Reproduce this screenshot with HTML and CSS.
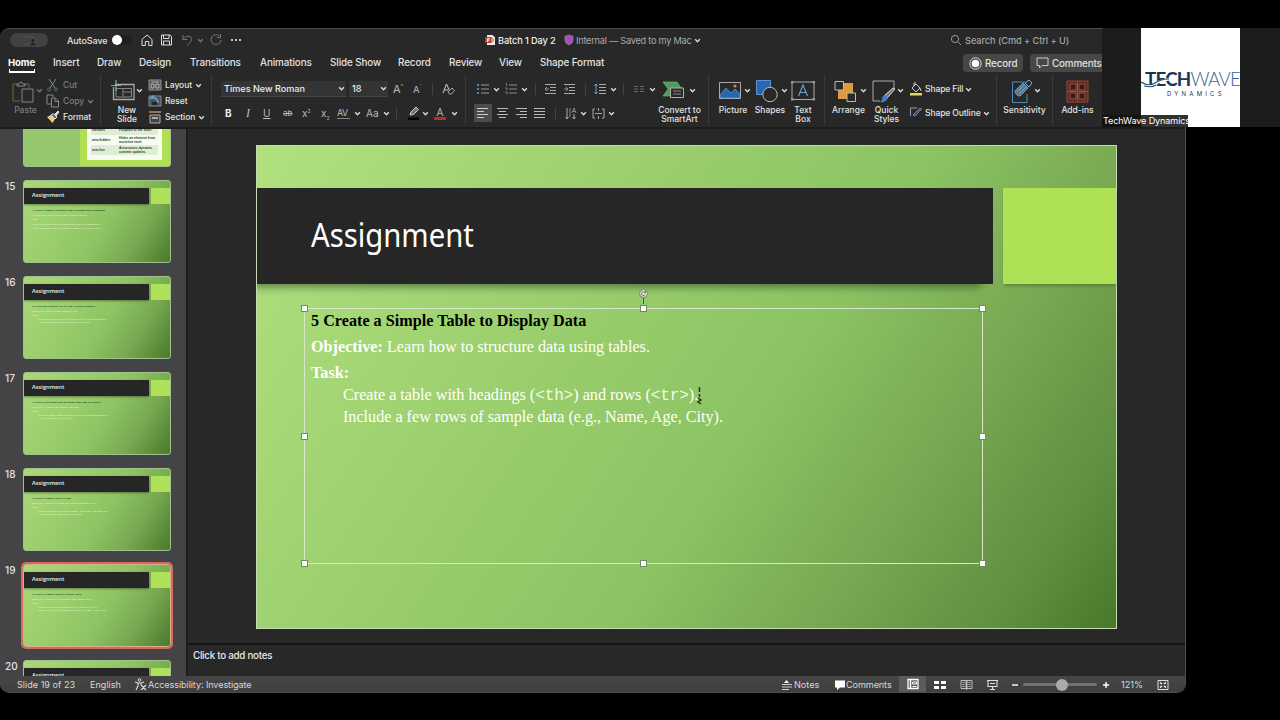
FILE: index.html
```
<!DOCTYPE html>
<html lang="en">
<head>
<meta charset="utf-8">
<title>Batch 1 Day 2</title>
<link rel="stylesheet" href="styles.css">
</head>
<body>
<svg class="defs" width="0" height="0">
  <symbol id="chev" viewBox="0 0 6 6"><path d="M1 2l2 2 2-2" fill="none" stroke="currentColor" stroke-width="1.2"/></symbol>
</svg>
<div class="app">
  <header class="titlebar">
    <span class="pill"><svg width="38" height="14" viewBox="0 0 38 14"><path d="M13 4h11v7h-9" fill="none" stroke="#555"/><circle cx="23" cy="7.500" r="1.500" fill="#1c1c1c"/><path d="M20 12q3-4 6 0z" fill="#1c1c1c"/></svg></span>
    <span class="t-auto">AutoSave</span>
    <span class="toggle"><i></i></span>
    <svg width="14" height="14" viewBox="0 0 14 14"><path d="M2 6.500l5-4.500 5 4.500v6H8.700V8.500H5.300v4H2z" fill="none" stroke="#ddd"/></svg>
    <svg width="14" height="14" viewBox="0 0 14 14"><path d="M1.500 2h8.500l1.500 1.500V12h-10zM3.500 2v3.500h5.500V2M3.500 12V8h6v4" fill="none" stroke="#ddd"/></svg>
    <svg width="14" height="14" viewBox="0 0 14 14"><path d="M2 2v4.500h4.500M2 6.500c2-4 9-4.500 8.500 0-.2 2-2.500 4-4.500 6" fill="none" stroke="#777"/></svg>
    <svg class="chev dim"><use href="#chev"/></svg>
    <svg width="14" height="14" viewBox="0 0 14 14"><path d="M10.500 3A5 5 0 1 0 12 7M11.500 1v3.500H8" fill="none" stroke="#777"/></svg>
    <svg width="14" height="14" viewBox="0 0 14 14"><g fill="#eee"><circle cx="2" cy="7" r="1.100"/><circle cx="6" cy="7" r="1.100"/><circle cx="10" cy="7" r="1.100"/></g></svg>
    <svg width="11" height="12" viewBox="0 0 11 12"><path d="M2 1h5.500L10 3.500V11H2z" fill="#f4e8e4"/><rect y="3" width="6.500" height="6" rx="1" fill="#b9432e"/><circle cx="6" cy="6" r="2.300" fill="none" stroke="#c8523c"/><path d="M2.500 8V4.500h1.500v1.800H2.500" fill="none" stroke="#fff" stroke-width=".8"/></svg>
    <span class="t-file">Batch 1 Day 2</span>
    <svg width="10" height="12" viewBox="0 0 10 12"><path d="M5 1l4 1.300v4Q9 9.500 5 11 1 9.500 1 6.300v-4z" fill="#9d55b2" stroke="#b77bc8" stroke-width=".6"/></svg>
    <span class="t-saved">Internal — Saved to my Mac</span>
    <svg class="chev"><use href="#chev"/></svg>
    <svg width="12" height="12" viewBox="0 0 12 12"><circle cx="5" cy="5" r="3.600" fill="none" stroke="#999"/><path d="M7.700 7.700L11 11" stroke="#999"/></svg>
    <span class="t-search">Search (Cmd + Ctrl + U)</span>
  </header>

  <nav class="tabs">
    <span class="active">Home</span><span>Insert</span><span>Draw</span><span>Design</span><span>Transitions</span><span>Animations</span><span>Slide Show</span><span>Record</span><span>Review</span><span>View</span><span>Shape Format</span>
    <span class="chip rec"><svg width="13" height="13" viewBox="0 0 13 13"><circle cx="6.500" cy="6.500" r="5.700" fill="none" stroke="#ddd"/><circle cx="6.500" cy="6.500" r="3.800" fill="#fff"/></svg>Record</span>
    <span class="chip com"><svg width="13" height="12" viewBox="0 0 13 12"><path d="M1 1h11v7.500H6L3.500 11V8.500H1z" fill="none" stroke="#ccc"/></svg>Comments</span>
  </nav>

  <section class="ribbon">
    <div class="group g-clip">
      <div class="big dimmed">
        <div class="ic"><svg width="24" height="24" viewBox="0 0 24 24"><path d="M6 4H1v17h7M12 4h5v4" fill="none" stroke="#75633e"/><path d="M5 6V4h2q2-4 4 0h2v2z" fill="none" stroke="#888"/><path d="M10 9h11v13H10z" fill="#282828" stroke="#858585"/></svg><svg class="chev"><use href="#chev"/></svg></div>
        <b>Paste</b>
      </div>
      <div class="mini">
        <div class="dimmed"><svg width="14" height="14" viewBox="0 0 14 14"><path d="M3 1l6 9M10 1L4 10" stroke="#888"/><circle cx="3" cy="11.500" r="1.500" fill="none" stroke="#577080"/><circle cx="10" cy="11.500" r="1.500" fill="none" stroke="#577080"/></svg>Cut</div>
        <div class="dimmed"><svg width="14" height="14" viewBox="0 0 14 14"><path d="M5 10H1V1h6v2M5.500 4h4l3 3v6h-7zM9 4v3.500h3.500" fill="none" stroke="#888"/></svg>Copy<svg class="chev"><use href="#chev"/></svg></div>
        <div><svg width="14" height="14" viewBox="0 0 14 14"><path d="M1 7l4-2 4 4-2.500 4z" fill="#e4cc7a"/><path d="M5 5l2-1.500L11 7 9 9z" fill="#666" stroke="#ddd"/><path d="M8.500 4.500L12 1l1 1-3 4" fill="#ddd" stroke="#ddd"/></svg>Format</div>
      </div>
    </div>
    <div class="group g-slides">
      <div class="big">
        <div class="ic"><svg width="25" height="24" viewBox="0 0 25 24"><path d="M4 4.500h19v15H2.500V7" fill="none" stroke="#a8a8a8" stroke-width="1.300"/><path d="M5 8.500h15.500v8.500H5zM12 8.500V17M12 12h8" fill="none" stroke="#858585"/><path d="M5 0v11M0 5.500h10" stroke="#73bd83" stroke-width="1.200"/></svg><svg class="chev"><use href="#chev"/></svg></div>
        <b>New<br>Slide</b>
      </div>
      <div class="mini">
        <div><svg width="14" height="12" viewBox="0 0 14 12"><path d="M1 1h12v10H1z" fill="#4b4b4b" stroke="#999"/><path d="M3 3h8M3 5h3v4H3zM8 5h3v4H8z" fill="none" stroke="#bbb"/></svg>Layout<svg class="chev"><use href="#chev"/></svg></div>
        <div><svg width="14" height="12" viewBox="0 0 14 12"><path d="M1 1h12v10H1z" fill="#465560" stroke="#888"/><path d="M2 4l3-3v2q5 0 5 5" fill="none" stroke="#65b2d2" stroke-width="1.300"/><path d="M4 7h5v3H4z" fill="#252525"/></svg>Reset</div>
        <div><svg width="14" height="14" viewBox="0 0 14 14"><path d="M1 1h12v2H1z" fill="#92745f"/><path d="M2 5h10v8H2z" fill="#444" stroke="#aaa"/><path d="M4 7h6v2H4z" fill="#aaa"/></svg>Section<svg class="chev"><use href="#chev"/></svg></div>
      </div>
    </div>
    <div class="group g-font">
      <div class="row f1">
        <span class="box fam">Times New Roman<svg class="chev"><use href="#chev"/></svg></span>
        <span class="box siz">18<svg class="chev"><use href="#chev"/></svg></span>
        <span class="ga">A<sup>^</sup></span><span class="ga sm">A<sup>ˇ</sup></span><i class="sep"></i>
        <svg width="14" height="14" viewBox="0 0 14 14"><path d="M1 11L4.500 2 8 10M2.500 8H6" fill="none" stroke="#ccc"/><path d="M6 10l4-4 2.500 2.500-3 3.500H7.500z" fill="#292929" stroke="#aaa"/></svg>
      </div>
      <div class="row f2">
        <b class="gb">B</b><i class="gi">I</i><u class="gu">U</u><s class="gs">ab</s><span class="gx">x<sup>2</sup></span><span class="gx">x<sub>2</sub></span>
        <span class="av">AV</span><svg class="chev"><use href="#chev"/></svg><span class="aa">Aa</span><svg class="chev"><use href="#chev"/></svg><i class="sep"></i>
        <svg width="13" height="15" viewBox="0 0 13 15"><path d="M3 9l1-3 5-5 2.500 2.500-5 5z" fill="#777" stroke="#ccc"/><path d="M1 11.500h11v2.500H1z" fill="#000"/></svg><svg class="chev"><use href="#chev"/></svg>
        <span class="fc">A</span><svg class="chev"><use href="#chev"/></svg>
      </div>
    </div>
    <div class="group g-para">
      <div class="rows">
        <div class="row p1">
          <svg width="13" height="12" viewBox="0 0 13 12"><path d="M4 2h8M4 6h8M4 10h8" stroke="#999"/><path d="M0 2h2M0 6h2M0 10h2" stroke="#69a0cc" stroke-width="1.500"/></svg><svg class="chev"><use href="#chev"/></svg>
          <svg width="13" height="12" viewBox="0 0 13 12"><path d="M4 2h8M4 6h8M4 10h8" stroke="#888"/><path d="M1.500 0v3M0 5h2v2M0 9h2v2.500" fill="none" stroke="#58839e"/></svg><svg class="chev"><use href="#chev"/></svg>
          <i class="sep"></i>
          <svg width="13" height="12" viewBox="0 0 13 12"><path d="M1 1.500h11M6 4.500h6M6 7.500h6M1 10.500h11" stroke="#aaa"/><path d="M5 6H1m2-2L1 6l2 2" fill="none" stroke="#69a0cc"/></svg>
          <svg width="13" height="12" viewBox="0 0 13 12"><path d="M1 1.500h11M6 4.500h6M6 7.500h6M1 10.500h11" stroke="#aaa"/><path d="M1 6h4M3 4l2 2-2 2" fill="none" stroke="#69a0cc"/></svg>
          <i class="sep"></i>
          <svg width="13" height="12" viewBox="0 0 13 12"><path d="M5 1.500h7M5 4.500h7M5 7.500h7M5 10.500h7" stroke="#aaa"/><path d="M2 1v10M.5 3L2 1l1.500 2M.5 9L2 11l1.500-2" fill="none" stroke="#69a0cc"/></svg><svg class="chev"><use href="#chev"/></svg>
          <i class="sep"></i>
          <svg width="13" height="12" viewBox="0 0 13 12"><path d="M1 3.500h4M7 3.500h4M1 6h4M7 6h4M1 8.500h4M7 8.500h4" stroke="#666"/></svg><svg class="chev"><use href="#chev"/></svg>
        </div>
        <div class="row p2">
          <span class="on"><svg width="13" height="12" viewBox="0 0 13 12"><path d="M1 1.500h11M1 4.500h7M1 7.500h11M1 10.500h7" stroke="#ccc"/></svg></span>
          <svg width="13" height="12" viewBox="0 0 13 12"><path d="M1 1.500h11M3 4.500h7M1 7.500h11M3 10.500h7" stroke="#bbb"/></svg>
          <svg width="13" height="12" viewBox="0 0 13 12"><path d="M1 1.500h11M5 4.500h7M1 7.500h11M5 10.500h7" stroke="#bbb"/></svg>
          <svg width="13" height="12" viewBox="0 0 13 12"><path d="M1 1.500h11M1 4.500h11M1 7.500h11M1 10.500h11" stroke="#bbb"/></svg>
          <i class="sep"></i>
          <svg width="13" height="13" viewBox="0 0 13 13"><path d="M2 1v11M.5 10L2 12l1.500-2M9 7v5M7.500 10L9 12l1.500-2" fill="none" stroke="#aaa"/><path d="M5 1v9M7 6l2-5 2 5M7.500 4.500h3" fill="none" stroke="#888"/></svg><svg class="chev"><use href="#chev"/></svg>
          <svg width="13" height="13" viewBox="0 0 13 13"><path d="M3 2H1v9h2M10 2h2v9h-2M3 6.500h7M6.500 1v3M6.500 9v3" fill="none" stroke="#aaa"/></svg><svg class="chev"><use href="#chev"/></svg>
        </div>
      </div>
      <div class="big conv">
        <div class="ic"><svg width="23" height="20" viewBox="0 0 23 20"><path d="M1 2h14l5 7-4 7H1l5-7z" fill="#4f9d5b" stroke="#79bc83" stroke-width=".6"/><path d="M8.500 8h13v9.500h-13z" fill="#292929" stroke="#b0b0b0"/><path d="M11 11h8M11 14h8" stroke="#888"/></svg><svg class="chev"><use href="#chev"/></svg></div>
        <b>Convert to<br>SmartArt</b>
      </div>
    </div>
    <div class="group g-insert">
      <div class="big"><div class="ic"><svg width="22" height="20" viewBox="0 0 22 20"><path d="M.5 2.500h21v16H.5z" fill="#292929" stroke="#aaa"/><path d="M1 15l6-7 5 5 4-4 5 5v4H1z" fill="#2468b4" stroke="#79a9da" stroke-width=".6"/><circle cx="16" cy="6" r="1.600" fill="#c0933f"/></svg><svg class="chev"><use href="#chev"/></svg></div><b>Picture</b></div>
      <div class="big"><div class="ic"><svg width="22" height="24" viewBox="0 0 22 24"><path d="M.5.500h14v14H.500z" fill="#2765b5" stroke="#6293cc"/><circle cx="14" cy="14.500" r="7.200" fill="#292929" stroke="#bbb"/></svg><svg class="chev"><use href="#chev"/></svg></div><b>Shapes</b></div>
      <div class="big"><div class="ic"><svg width="24" height="22" viewBox="0 0 24 22"><path d="M1 2h22v17.500H1z" fill="none" stroke="#aaa"/><path d="M0 1h2.500v2.500H0zM21.500 1H24v2.500h-2.500zM0 18h2.500v2.500H0zM21.500 18H24v2.500h-2.500z" fill="#999"/><path d="M7.500 16L12 5l4.500 11M9 12.500h6" fill="none" stroke="#63a0cf" stroke-width="1.200"/></svg></div><b>Text<br>Box</b></div>
    </div>
    <div class="group g-draw">
      <div class="big"><div class="ic"><svg width="23" height="24" viewBox="0 0 23 24"><path d="M6 3h13v13h-5v3H4V9h2z" fill="#dd9b3e"/><path d="M1 1.500h8.500V10H1zM13 13h8.500v8.500H13z" fill="#292929" stroke="#bbb"/></svg><svg class="chev"><use href="#chev"/></svg></div><b>Arrange</b></div>
      <div class="big"><div class="ic"><svg width="24" height="24" viewBox="0 0 24 24"><path d="M8 21H1V1h21v7" fill="none" stroke="#aaa"/><path d="M12 16L21 8l2 1-8 9z" fill="#777" stroke="#ddd"/><path d="M13 15l3 3q-2 5-8 4 3-2 2-5z" fill="#3c7dd0"/></svg><svg class="chev"><use href="#chev"/></svg></div><b>Quick<br>Styles</b></div>
      <div class="shape">
        <div><svg width="14" height="14" viewBox="0 0 14 14"><path d="M3 6l4-4 4 4-4 4zM5 4V1h2" fill="none" stroke="#ccc"/><path d="M11 6l1 3" stroke="#ccc"/><path d="M1 11h12v2.500H1z" fill="#e4da56"/></svg>Shape Fill<svg class="chev"><use href="#chev"/></svg></div>
        <div><svg width="14" height="14" viewBox="0 0 14 14"><path d="M8 2H1.500v8" fill="none" stroke="#8ba2bb"/><path d="M4 9l7-7 1.500 1L6 10z" fill="#345" stroke="#88a"/><path d="M1 11h10v2.500H1z" fill="#13264d"/></svg>Shape Outline<svg class="chev"><use href="#chev"/></svg></div>
      </div>
    </div>
    <div class="group g-sens">
      <div class="big"><div class="ic"><svg width="22" height="24" viewBox="0 0 22 24"><path d="M14 2H1.500v20.500H16V14" fill="none" stroke="#488fc0"/><path d="M4 11l8-8 5 5-8 8q-4 0-5-5z" fill="#5a7183" stroke="#76a2bd"/><path d="M6 12l7-7M8 14l7-7M14 3l4-3 3 3-3 4z" fill="none" stroke="#6eb2e0"/></svg><svg class="chev"><use href="#chev"/></svg></div><b>Sensitivity</b></div>
    </div>
    <div class="group g-add">
      <div class="big"><div class="ic"><svg width="23" height="23" viewBox="0 0 23 23"><path d="M1 1h21v21H1z" fill="#5b2a22" stroke="#984636"/><path d="M4 4h6v6H4zM13 4h6v6h-6zM4 13h6v6H4zM13 13h6v6h-6z" fill="#30211f" stroke="#a64c3a"/><path d="M11.500 1v21M1 11.500h21" stroke="#a64c3a"/></svg></div><b>Add-ins</b></div>
    </div>
  </section>

  <main class="work">
    <aside class="panel">
      <div class="item"><span></span><div class="thumb table"><div class="sheet"><p><b>element</b><b>Purpose of the label.</b></p><p><b>aria-hidden</b><b>Hides an element from assistive tech.</b></p><p><b>aria-live</b><b>Announces dynamic content updates.</b></p></div></div></div>
      <div class="item"><span>15</span><div class="thumb"><div class="band"><h6>Assignment</h6><i></i></div><p class="k">1 Create a Simple Webpage with a Heading and Paragraph</p><p>1. Objective: Understand basic HTML structure</p><p>Task:</p><p>Create a webpage with a heading (h1) and a paragraph text</p><p>Add a paragraph and explain the purpose of HTML below it</p></div></div>
      <div class="item"><span>16</span><div class="thumb"><div class="band"><h6>Assignment</h6><i></i></div><p class="k">2 Create an Ordered List of Your Favorite Hobbies</p><p>Objective: Practice using lists in HTML</p><p>Task:</p><p class="in">Create an ordered list (ol) of your top five favorite hobbies</p><p class="in">Each list item should be wrapped in an li tag</p></div></div>
      <div class="item"><span>17</span><div class="thumb"><div class="band"><h6>Assignment</h6><i></i></div><p class="k">3 Create a Webpage with an Image and Link to Website</p><p>Objective: Learn to use images and links.</p><p>Task:</p><p class="in">Insert an image using the img tag with a width and height set</p><p class="in">Create a link below it (a href)</p></div></div>
      <div class="item"><span>18</span><div class="thumb"><div class="band"><h6>Assignment</h6><i></i></div><p class="k">4 Create a Simple Survey Form</p><p>Objective: Practice creating basic forms and input types</p><p>Task:</p><p class="in">Create a form with fields for name, email and a message box</p><p class="in">Use appropriate input types and labels</p></div></div>
      <div class="item"><span>19</span><div class="thumb sel"><div class="band"><h6>Assignment</h6><i></i></div><p class="k">5 Create a Simple Table to Display Data</p><p>Objective: Learn how to structure data using tables.</p><p>Task:</p><p class="in">Create a table with headings (&lt;th&gt;) and rows (&lt;tr&gt;).</p><p class="in">Include a few rows of sample data (e.g., Name, Age, City).</p></div></div>
      <div class="item"><span>20</span><div class="thumb"><div class="band"><h6>Assignment</h6><i></i></div></div></div>
    </aside>
    <div class="stage">
      <div class="canvas">
        <article class="slide">
          <div class="head"><h1><span>Assignment</span></h1><div class="accent"></div></div>
          <div class="content">
            <p class="l1"><b>5 Create a Simple Table to Display Data</b></p>
            <p class="l2"><b>Objective:</b> Learn how to structure data using tables.</p>
            <p class="l3"><b>Task:</b></p>
            <p class="l4">Create a table with headings (<code>&lt;th&gt;</code>) and rows (<code>&lt;tr&gt;</code>).</p>
            <p class="l5">Include a few rows of sample data (e.g., Name, Age, City).</p>
            <i class="h nw"></i><i class="h n"></i><i class="h ne"></i><i class="h w"></i><i class="h e"></i><i class="h sw"></i><i class="h s"></i><i class="h se"></i>
            <svg class="rot" width="11" height="20" viewBox="0 0 11 20"><path d="M5.500 9v7" stroke="#555"/><circle cx="5.500" cy="5.500" r="4" fill="#dfeecf" stroke="#777"/><path d="M7 4.300A2 2 0 1 0 7.300 6.500M7.500 3v1.700H6" fill="none" stroke="#555" stroke-width=".8"/></svg>
            <svg class="cursor" width="7" height="20" viewBox="0 0 7 20"><path d="M3.500 1v5M3.500 8v3M2 12l3 2-3 2 3 2" fill="none" stroke="#20381a" stroke-width="1.500"/></svg>
          </div>
        </article>
      </div>
      <div class="notes">Click to add notes</div>
    </div>
  </main>

  <footer class="status">
    <span class="s-slide">Slide 19 of 23</span><span class="s-lang">English</span>
    <svg width="13" height="13" viewBox="0 0 13 13"><circle cx="5.500" cy="2" r="1.300" fill="none" stroke="#ddd"/><path d="M1 4l3 1h3l3-1M4 5v3l-2 4M7 5v2M7 7l5 5M12 7l-5 5" fill="none" stroke="#ddd" stroke-width="1.100"/></svg>
    <span class="s-acc">Accessibility: Investigate</span>
    <svg width="12" height="12" viewBox="0 0 12 12"><path d="M5.500 1L8 4H3z" fill="#fff"/><path d="M1 5.500h10M1 8h10M1 10.500h7" stroke="#ccc"/></svg><span class="s-notes">Notes</span>
    <svg width="12" height="12" viewBox="0 0 12 12"><path d="M1 1.500h10v7H6L3 11V8.500H1z" fill="#fff"/></svg><span class="s-com">Comments</span>
    <span class="view"><svg width="12" height="12" viewBox="0 0 12 12"><path d="M1 1.500h10v9H1z" fill="none" stroke="#fff" stroke-width="1.300"/><path d="M3.500 1v10" stroke="#fff" stroke-width="1.500"/><path d="M5.500 4h4v2h-4zM5.500 8.500h4" fill="none" stroke="#fff"/></svg></span>
    <svg width="13" height="12" viewBox="0 0 13 12"><path d="M0 2h5v3H0zM7 2h5v3H7zM0 7h5v3H0zM7 7h5v3H7z" fill="#fff"/></svg>
    <svg width="13" height="12" viewBox="0 0 13 12"><path d="M1 1.500h5v8H1zM7 1.500h5v8H7zM6.500 1v10M2.500 3.500h2M2.500 5.500h2M2.500 7.500h2M8.500 3.500h2M8.500 5.500h2M8.500 7.500h2" fill="none" stroke="#bbb"/></svg>
    <svg width="13" height="12" viewBox="0 0 13 12"><path d="M1 1.500h11M2 1.500v6h9v-6M4 4.500h5M6.500 7.500v3M4 10.500h5" fill="none" stroke="#ddd" stroke-width="1.100"/></svg>
    <svg width="8" height="8" viewBox="0 0 8 8"><path d="M1 4h6" stroke="#fff" stroke-width="1.400"/></svg>
    <span class="slider"><i></i></span>
    <svg width="8" height="8" viewBox="0 0 8 8"><path d="M1 4h6M4 1v6" stroke="#fff" stroke-width="1.400"/></svg>
    <span class="s-zoom">121%</span>
    <svg width="12" height="12" viewBox="0 0 12 12"><path d="M1 1.500h10v9H1z" fill="none" stroke="#ddd"/><path d="M3 3.500l2 1.500M9 3.500L7 5M3 8.500L5 7M9 8.500L7 7" stroke="#fff" stroke-width="1.400"/></svg>
  </footer>
</div>

<div class="video">
  <div class="logo">
    <div class="name"><b>TECH</b><span>WAVE</span></div>
    <div class="sub">DYNAMICS</div>
    <svg class="wave" width="40" height="12" viewBox="0 0 40 12"><path d="M0 6q8 5 14 1T30 2" fill="none" stroke="#fff" stroke-width="2.500"/><path d="M0 5q8 5 14 1T28 2M3 9q8 2 12-1" fill="none" stroke="#24506f" stroke-width="1.100"/></svg>
  </div>
  <span class="who">TechWave Dynamics</span>
</div>
</body>
</html>
```
FILE: styles.css
```
* { box-sizing: border-box; }
body { margin: 0; width: 1280px; height: 720px; overflow: hidden; background: #000; color: #e2e2e2; font-family: Inter, "Liberation Sans", sans-serif; padding-top: 28px; position: relative; }
.defs { position: absolute; }
svg { display: block; flex: none; }
p, h1, h6 { margin: 0; font-weight: 400; }
.app { width: 1186px; height: 665px; border: 1px solid #4c4c4c; border-left: 0; border-radius: 9px 0 9px 9px; overflow: hidden; background: #282828; display: grid; grid-template-rows: 22px 22px 56px 547px 16px; }
.chev { width: 7px; height: 7px; color: #ddd; }
.dim { color: #777; }

.titlebar { display: grid; grid-template-columns: 57px 45px 28px 20px 21px 16px 12px 21px 255px 13px 66px 12px 118px 256px 15px 130px; padding-left: 10px; align-items: center; white-space: nowrap; font-size: 9.500px; }
.pill { width: 38px; height: 14px; border-radius: 7px; background: #424242; }
.t-auto { font-weight: 500; font-size: 9px; letter-spacing: -.1px; }
.toggle { width: 20px; height: 10px; border-radius: 5px; background: #1f1f1f; }
.toggle i { display: block; width: 10px; height: 10px; border-radius: 5px; background: #fff; }
.t-file { font-weight: 500; color: #eee; font-size: 9.200px; letter-spacing: -.1px; }
.t-saved { color: #aaa; font-size: 9.200px; letter-spacing: -.24px; }
.t-search { color: #a5a5a5; font-weight: 500; font-size: 9.200px; letter-spacing: -.06px; }

.tabs { display: grid; grid-template-columns: 45px 44px 42px 51px 70px 70px 68px 51px 50px 41px 423px 67px 70px; padding-left: 8px; align-items: center; white-space: nowrap; font-size: 9.900px; font-weight: 500; letter-spacing: -.12px; }
.active { font-weight: 700; color: #fff; width: 28px; box-shadow: 0 4px 0 -2px #282828, 0 5px 0 -1px #fff; padding-bottom: 1px; padding-top: 1px; font-size: 9.600px; }
.chip { height: 18px; border-radius: 4px; background: #474747; display: flex; align-items: center; gap: 3px; padding-left: 6px; font-size: 9.800px; position: relative; top: 1px; }
.rec { width: 60px; }
.com { width: 80px; }

.ribbon { display: grid; grid-template-columns: 101px 111px 254px 243px 116px 172px 56px 132px; border-bottom: 2px solid #1c1c1c; font-size: 8.500px; padding-top: 2px; }
.group { display: flex; border-right: 1px solid #3b3b3b; margin: 0 0 3px; }
.big { text-align: center; line-height: 9px; color: #e2e2e2; flex: none; width: 38px; }
.big b { font-weight: 500; display: block; white-space: nowrap; margin: 3px -12px 0; }
.ic { height: 28px; padding-top: 5px; display: flex; gap: 3px; }
.ic .chev { margin-top: 7px; }
.dimmed { color: #7d7d7d; }
.dimmed .chev { color: #777; }
.g-clip { padding-left: 12px; }
.g-clip .big { width: 27px; margin-right: 7px; }
.g-clip .ic, .g-slides .ic { gap: 0; }
.mini { display: grid; grid-template-rows: repeat(3, 16px); padding-top: 2px; font-weight: 500; }
.mini div { display: flex; align-items: center; gap: 3px; white-space: nowrap; letter-spacing: -.05px; }
.g-slides { padding-left: 10px; }
.g-slides .big { width: 32px; margin-right: 5px; }
.g-font, .rows { display: grid; grid-template-rows: 24px 24px; padding-top: 2px; }
.row { display: grid; align-items: center; }
.f1 { grid-template-columns: 128px 44px 20px 19px 10px 20px; padding-left: 9px; }
.box { background: #343434; height: 16px; border-bottom: 1px solid #454545; display: flex; align-items: center; justify-content: space-between; padding: 0 1px 0 3px; font-size: 9.100px; font-weight: 500; color: #eee; }
.fam { width: 125px; }
.siz { width: 39px; }
.ga { font-size: 11px; line-height: 11px; color: #bbb; }
.ga.sm { font-size: 9.500px; }
.ga sup { font-size: 6px; line-height: 0; }
.sep { width: 1px; height: 11px; background: #444; }
.f2 { grid-template-columns: 19px 19px 20px 19px 19px 16px 17px 12px 17px 13px 11px 15px 12px 17px 12px; padding-left: 13px; font-size: 10px; color: #bbb; line-height: 12px; }
.gb { color: #eee; }
.gi { font-family: "Liberation Serif", serif; font-size: 12px; padding-left: 2px; }
.gs { font-size: 8px; }
.gx sup, .gx sub { font-size: 5px; line-height: 0; }
.av { font-size: 9px; border-bottom: 1px solid #888; line-height: 10px; width: 13px; letter-spacing: -.5px; }
.fc { border-bottom: 3px solid #b8312f; width: 12px; text-align: center; line-height: 10px; }
.g-para { padding-left: 8px; }
.rows { width: 187px; flex: none; }
.p1 { grid-template-columns: 16px 12px 16px 14px 9px 19px 22px 9px 16px 13px 10px 16px 10px; padding-left: 3px; }
.p2 { grid-template-columns: 22px 19px 18px 22px 10px 15px 12px 16px 12px; }
.on { width: 18px; height: 18px; background: #4b4b4b; padding: 3px 2px; }
.conv { width: 35px; margin-left: 1px; }
.conv .ic { gap: 4px; }
.g-insert { padding-left: 10px; }
.g-insert .big { width: 28px; margin-right: 9px; }
.g-insert .big:last-child { width: 23px; margin: 0; padding-right: 3px; }
.g-insert .big:last-child .ic { margin-left: -2px; }
.g-draw { padding-left: 9px; }
.g-draw .big { width: 29px; margin-right: 9px; }
.g-draw .big:nth-child(2) .ic { gap: 1px; }
.g-draw .big:nth-child(2) { margin-right: 8px; }
.shape { display: grid; grid-template-rows: 24px 24px; padding-top: 2px; font-weight: 500; letter-spacing: -.1px; }
.shape div { display: flex; align-items: center; gap: 2px; white-space: nowrap; }
.g-sens { padding-left: 14px; }
.g-sens .big { width: 27px; }
.g-sens .ic { gap: 1px; }
.g-add { padding-left: 13px; border: 0; }
.g-add .big { width: 23px; }

.work { display: grid; grid-template-columns: 188px 1fr; overflow: hidden; }
.panel { background: #444446; border-right: 2px solid #1d1d1d; overflow: hidden; height: 547px; }
.item { display: grid; grid-template-columns: 18px 148px; height: 96px; padding-left: 5px; }
.item:first-child { margin-top: -45px; }
.item > span { font-size: 10px; font-weight: 500; line-height: 12px; }
.thumb { height: 83px; border: 1px solid #a2c28c; border-radius: 3px; background: linear-gradient(122deg, #abd879, #9acd6b 35%, #8dc463 56%, #79a952 76%, #4a7a2c); overflow: hidden; font-family: "Liberation Serif", serif; font-size: 2.900px; line-height: 4.500px; color: #edffdf; padding-top: 7px; }
.thumb p { padding-left: 8px; white-space: nowrap; }
.thumb .k { color: #253e17; font-weight: 700; margin-top: 4px; }
.thumb .in { padding-left: 14px; line-height: 3.700px; }
.band { display: grid; grid-template-columns: 125px 1fr; gap: 2px; height: 16px; }
.band h6 { background: #262626; padding-left: 8px; font: 600 5.700px/15px "Open Sans", sans-serif; color: #eee; box-shadow: 0 1px 2px #3338; }
.band i { background: #aee157; }
.sel { box-shadow: 0 0 0 2px #d9695d; border-color: #d3b28a; }
.table { background: linear-gradient(90deg, #95c76c 56px, #b0e050 56px); padding: 40px 8px 7px 63px; }
.sheet { background: #f7fbf2; height: 35px; color: #30442a; padding: 0 4px; font-family: "Liberation Sans", sans-serif; font-size: 3.400px; line-height: 4px; }
.thumb .sheet p { display: grid; grid-template-columns: 27px 40px; padding: 1px; white-space: normal; height: 10px; align-items: center; }
.sheet p:nth-child(odd) { background: #dfeed3; }

.stage { display: grid; grid-template-rows: 514px 33px; }
.canvas { padding: 16px 0 0 68px; background: #282828; }
.slide { width: 861px; height: 484px; border: 1px solid #c4dbb4; background: linear-gradient(124deg, #b1e17f, #9bce6d 35%, #8cc463 57%, #79a953 74%, #5f8f40 90%, #49782b); padding-top: 42px; }
.head { display: grid; grid-template-columns: 736px 113px; gap: 10px; height: 96px; }
.head h1 { background: #262626; color: #fff; font: 400 32.500px/94px "Noto Sans", sans-serif; padding-left: 54px; box-shadow: -8px 7px 8px -4px #2a3c1d99; clip-path: inset(0 0 -20px 0); }
.head h1 span { display: inline-block; transform: scaleX(.9); transform-origin: 0 50%; }
.accent { background: #aee156; box-shadow: 0 3px 3px -1px #41651f88; }
.content { position: relative; margin: 24px 0 0 47px; width: 679px; height: 256px; border: 1px solid #d5e8c8; padding: 0 0 0 6px; color: #fff; font-family: "Liberation Serif", serif; font-size: 16.200px; white-space: nowrap; }
.content p { height: 26px; line-height: 24px; }
.content .l1 { color: #000; }
.content .l4, .content .l5 { padding-left: 32px; height: 22px; line-height: 16px; letter-spacing: -.02px; }
.content code { font: 16px "Liberation Mono", monospace; line-height: 10px; color: #eefae5; letter-spacing: -.1px; }
.h { position: absolute; width: 5px; height: 5px; background: #fff; outline: 1px solid #73895f; }
.nw, .n, .ne { top: -3px; }
.w, .e { top: 125px; }
.sw, .s, .se { bottom: -3px; }
.nw, .w, .sw { left: -3px; }
.n, .s { left: 336px; }
.ne, .e, .se { right: -3px; }
.rot { position: absolute; left: 333px; top: -21px; }
.cursor { position: absolute; left: 391px; top: 77px; }
.notes { border-top: 2px solid #151515; padding: 5px 0 0 5px; font-size: 9.800px; color: #e8e8e8; letter-spacing: -.27px; font-weight: 500; }

.status { background: linear-gradient(#464646, #3e3e3e); display: grid; grid-template-columns: 73px 44px 14px 633px 13px 40px 12px 53px 35px 26px 26px 25px 12px 79px 19px 36px 14px; padding-left: 17px; align-items: center; white-space: nowrap; font-size: 9.100px; color: #d8d8d8; height: 17px; }
.s-acc { letter-spacing: -.1px; }
.s-com { letter-spacing: -.1px; }
.view { background: #5b5b5b; width: 27px; height: 17px; padding: 2px 8px; }
.slider { width: 74px; height: 3px; background: #717171; border-radius: 2px; display: flex; align-items: center; padding-left: 33px; }
.slider i { width: 12px; height: 12px; border-radius: 6px; background: #aaa; flex: none; }

.video { position: absolute; left: 1102px; top: 28px; width: 178px; height: 99px; background: #1c1c1c; padding-left: 39px; }
.logo { background: #fff; width: 99px; height: 99px; padding-top: 40px; position: relative; color: #173850; white-space: nowrap; }
.name { font: 18.700px/22px Lato, sans-serif; padding-left: 4px; letter-spacing: -.75px; }
.name b { font-weight: 700; }
.name span { font-weight: 300; color: #356887; }
.sub { font-size: 6px; letter-spacing: 3.200px; line-height: 7px; padding-left: 26px; }
.wave { position: absolute; left: 0; top: 49px; }
.who { position: absolute; left: 0; bottom: 0; height: 12px; width: 86px; background: #111d; color: #fff; font-size: 9.100px; letter-spacing: -.13px; line-height: 12px; padding-left: 1px; white-space: nowrap; }
```
